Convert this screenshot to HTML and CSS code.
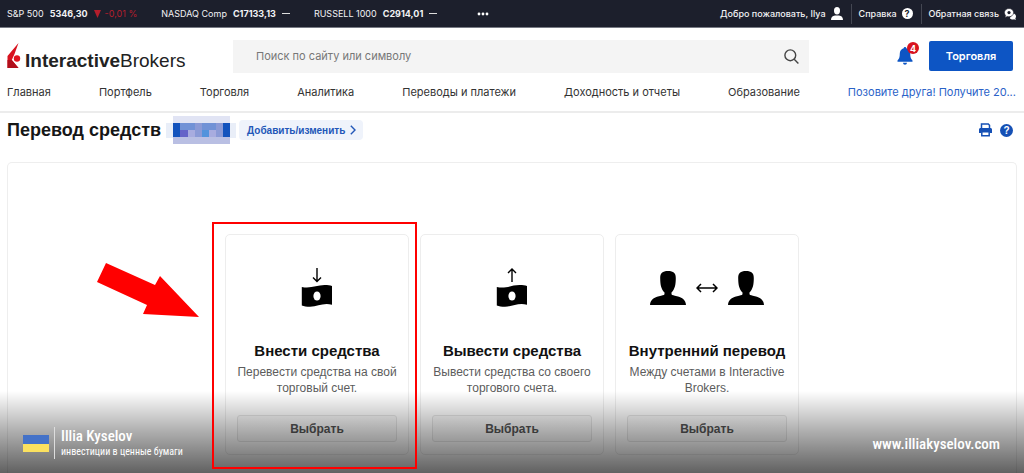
FILE: index.html
```html
<!DOCTYPE html>
<html lang="ru">
<head>
<meta charset="utf-8">
<meta name="viewport" content="width=device-width, initial-scale=1">
<title>Перевод средств</title>
<link rel="stylesheet" href="styles.css">
</head>
<body>
<div class="page">
  <div class="topbar">
    <div class="tickers">
      <div class="ticker"><span>S&amp;P 500</span><b>5346,30</b><span class="down"><svg width="7" height="8" viewBox="0 0 7 8" aria-hidden="true"><path d="M0 0h7L3.500 8z" fill="currentColor"/></svg>-0,01 %</span></div>
      <div class="ticker"><span>NASDAQ Comp</span><b>C17133,13</b><span class="dash"></span></div>
      <div class="ticker"><span>RUSSELL 1000</span><b>C2914,01</b><span class="dash"></span></div>
      <button class="more" aria-label="Ещё"><svg width="12" height="4" viewBox="0 0 12 4" fill="#fff"><circle cx="2" cy="2" r="1.400"/><circle cx="6" cy="2" r="1.400"/><circle cx="10" cy="2" r="1.400"/></svg></button>
    </div>
    <div class="account">
      <a href="#">Добро пожаловать, Ilya <svg width="12" height="13" viewBox="0 0 12 13" fill="#fff"><ellipse cx="6" cy="3.700" rx="3" ry="3.700"/><path d="M0 13c0-3 1.500-4.300 4-4.600h4c2.500.3 4 1.600 4 4.600z"/></svg></a>
      <a href="#">Справка <span class="help-dot">?</span></a>
      <a href="#">Обратная связь <svg width="12" height="12" viewBox="0 0 12 12"><path d="M9 5.500c2 .3 3 1.400 3 3 0 .8-.3 1.400-.7 1.900l.6 1.500-1.900-.6c-1.800.5-3.500 0-4.200-1.300z" fill="#fff"/><path d="M5 .5C7.600.500 9.600 2.300 9.600 4.600S7.600 8.800 5 8.800c-.6 0-1.100-.1-1.600-.3L.9 9.500l.7-2.100C.8 6.700.4 5.700.4 4.600.4 2.300 2.400.500 5 .500z" fill="#fff" stroke="#1c1f2c" stroke-width=".6"/><circle cx="5" cy="4.600" r="1.600" fill="#1c1f2c"/></svg></a>
    </div>
  </div>

  <header class="header">
    <a class="logo" href="#">
      <svg width="14" height="26" viewBox="0 0 14 26" aria-hidden="true"><path d="M11.500 0 7.500 11 4.800 17l6.700 8H.5V13z" fill="#d8131f"/><path d="M.5 17v8h11L4.800 17z" fill="#b10f1b"/><circle cx="10" cy="15.500" r="3.200" fill="#e01420"/></svg>
      <span class="logo-text"><b>Interactive</b>Brokers</span>
    </a>
    <label class="search">
      <input type="search" placeholder="Поиск по сайту или символу" aria-label="Поиск по сайту или символу">
      <svg width="15" height="15" viewBox="0 0 15 15" fill="none" stroke="#444" stroke-width="1.400"><circle cx="6.300" cy="6.300" r="5.400"/><path d="m10.200 10.200 4.200 4.200"/></svg>
    </label>
    <div class="actions">
      <button class="bell" aria-label="Уведомления">
        <svg width="16" height="18" viewBox="0 0 16 18" fill="#0d55c4"><path d="M8 0c.8 0 1.300.6 1.300 1.300C11.800 2 13.200 4 13.200 6.500c0 4 .8 5.500 2.300 7v1.300H.5v-1.300c1.500-1.500 2.300-3 2.300-7C2.800 4 4.200 2 6.700 1.300 6.700.6 7.200 0 8 0zM6 15.800h4c-.1 1.200-.9 1.900-2 1.900s-1.900-.7-2-1.900z"/></svg>
        <span class="badge">4</span>
      </button>
      <button class="trade">Торговля</button>
    </div>
  </header>

  <nav class="nav">
    <a href="#">Главная</a>
    <a href="#">Портфель</a>
    <a href="#">Торговля</a>
    <a href="#">Аналитика</a>
    <a href="#">Переводы и платежи</a>
    <a href="#">Доходность и отчеты</a>
    <a href="#">Образование</a>
    <a class="promo" href="#">Позовите друга! Получите 20...</a>
  </nav>

  <div class="title-row">
    <h1>Перевод средств</h1>
    <span class="masked"><svg width="70" height="28" viewBox="0 0 70 28" shape-rendering="crispEdges"><path fill="#e9eef8" d="M0 7h70v15H0z"/><path fill="#e1e4f4" d="M7 0h57v7H7z"/><path fill="#b9bfe3" d="M7 21h57v7H7z"/><path fill="#1353bd" d="M7 7h7v14H7zM57 7h7v14h-7z"/><path fill="#7192d6" d="M14 7h15v7H14zM36 7h14v7H36z"/><path fill="#8b9ad6" d="M29 7h7v7h-7zM50 7h7v14h-7zM28 14h8v7h-8z"/><path fill="#6463c8" d="M14 14h8v7h-8z"/><path fill="#a8acdf" d="M22 14h7v7h-7zM43 14h7v7h-7z"/><path fill="#5293dc" d="M36 14h7v7h-7z"/></svg></span>
    <button class="chip">Добавить/изменить <svg width="6" height="10" viewBox="0 0 6 10" fill="none" stroke="#2257b8" stroke-width="1.400"><path d="m.8.800 4.200 4.200L.8 9.200"/></svg></button>
    <div class="tools">
      <button aria-label="Печать"><svg width="13" height="14" viewBox="0 0 13 14"><path d="M2.500 5V1h6.800l1.200 1.200V5" fill="none" stroke="#1550b5" stroke-width="1.500"/><path d="M1.500 5h10c.8 0 1.500.7 1.500 1.500V10h-2V8.500H2V10H0V6.500C0 5.700.7 5 1.500 5z" fill="#1550b5"/><path d="M2.800 8.800h7.400v4H2.800z" fill="#fff" stroke="#1550b5" stroke-width="1.500"/></svg></button>
      <button class="help-blue" aria-label="Справка">?</button>
    </div>
  </div>

  <main class="panel">
    <div class="cards">
      <section class="card selected">
        <div class="icon"><svg width="32" height="40" viewBox="0 0 32 40"><path d="M16 0v13M12 9.500l4 4 4-4" fill="none" stroke="#000" stroke-width="1.400"/><path d="M.8 19c9 2 15-2 23-1.900 3 0 5.200.3 7.200.9v18.700c-9-2.200-14 1.800-22 2-3.500 0-6-.3-8.200-1.200z"/><ellipse cx="16" cy="28" rx="3.600" ry="4.600" fill="#fff"/></svg></div>
        <h2>Внести средства</h2>
        <p>Перевести средства на свой торговый счет.</p>
        <button class="choose">Выбрать</button>
        <span class="frame"></span>
        <svg class="pointer" width="102" height="56" viewBox="0 0 102 56" aria-hidden="true"><path d="m9 0 49 22 5-9 39 41-56-3 4-9L0 19z" fill="#f00"/></svg>
      </section>
      <section class="card">
        <div class="icon"><svg width="32" height="40" viewBox="0 0 32 40"><path d="M16 14V1M12 5l4-4 4 4" fill="none" stroke="#000" stroke-width="1.400"/><path d="M.8 19c9 2 15-2 23-1.900 3 0 5.200.3 7.200.9v18.700c-9-2.200-14 1.800-22 2-3.500 0-6-.3-8.200-1.200z"/><ellipse cx="16" cy="28" rx="3.600" ry="4.600" fill="#fff"/></svg></div>
        <h2>Вывести средства</h2>
        <p>Вывести средства со своего торгового счета.</p>
        <button class="choose">Выбрать</button>
      </section>
      <section class="card">
        <div class="icon people">
          <svg width="36" height="34" viewBox="0 0 36 34"><path id="person" d="M18 0c5.500 0 8 2.200 7.800 7.500-.1 6-.8 10.500-4.300 14v1.700c.5 1 2.500 1.300 5.500 2 5.500 1.300 8.700 4 9 8.800H0c.3-4.800 3.500-7.500 9-8.800 3-.7 5-1 5.500-2v-1.700c-3.500-3.500-4.200-8-4.300-14C10 2.200 12.500 0 18 0z"/></svg>
          <svg width="22" height="10" viewBox="0 0 22 10" fill="none" stroke="#000" stroke-width="1.500"><path d="M1 5h20M5 1 1 5l4 4M17 1l4 4-4 4"/></svg>
          <svg width="36" height="34" viewBox="0 0 36 34"><use href="#person"/></svg>
        </div>
        <h2>Внутренний перевод</h2>
        <p>Между счетами в Interactive Brokers.</p>
        <button class="choose">Выбрать</button>
      </section>
    </div>
  </main>

  <footer class="overlay">
    <div class="brand">
      <svg width="26" height="17" viewBox="0 0 26 17" aria-hidden="true"><path fill="#4472c8" d="M0 0h26v9H0z"/><path fill="#fbe15f" d="M0 9h26v8H0z"/></svg>
      <div class="brand-text"><strong>Illia Kyselov</strong><span>инвестиции в ценные бумаги</span></div>
    </div>
    <a class="site" href="#">www.illiakyselov.com</a>
  </footer>
</div>
</body>
</html>
```
FILE: styles.css
```css
* { box-sizing: border-box; }
body { margin: 0; background: #fff; color: #222; font-family: "Liberation Sans", Arial, sans-serif; }
a { color: inherit; text-decoration: none; }
button { font: inherit; border: 0; padding: 0; background: none; cursor: pointer; }
svg { display: block; flex: none; }
h1, h2, p { margin: 0; }

.page { position: relative; display: flex; flex-direction: column; min-height: 100vh; overflow: hidden; }

.topbar, .header, .nav, .account, .search { font-family: Inter, "Noto Sans", sans-serif; }
.topbar { display: flex; justify-content: space-between; align-items: center; height: 28px; padding: 0 8px 0 7px; background: #1c1f2c; color: #f2f2f4; font-size: 9px; white-space: nowrap; border-bottom: 1px solid #777a84; }
.tickers { display: flex; align-items: center; gap: 24px; }
.ticker { display: flex; align-items: center; gap: 6px; }
.down { display: flex; align-items: center; gap: 4px; color: #b51e2c; }
.dash { width: 8px; height: 1px; background: #ddd; }
.more { margin-left: 16px; }
.account { display: flex; align-items: center; font-weight: 500; }
.account a { display: flex; align-items: center; gap: 5px; height: 20px; }
.account a + a { margin-left: 8px; padding-left: 7px; border-left: 1px solid #444752; }
.help-dot, .help-blue { display: grid; place-items: center; border-radius: 50%; font-weight: 700; }
.help-dot { width: 11px; height: 11px; background: #fff; color: #1c1f2c; font-size: 9px; }

.header { display: flex; align-items: center; height: 56px; padding: 0 11px 0 7px; }
.logo { display: flex; align-items: flex-end; gap: 4px; width: 226px; flex: none; color: #222; }
.logo-text { font: 19px/16px "Liberation Sans", Arial, sans-serif; }
.search { display: flex; align-items: center; flex: 1; height: 33px; padding: 0 10px 0 23px; background: #f4f4f4; }
.search input { flex: 1; min-width: 0; border: 0; padding: 0; outline: 0; background: none; font: 11px Inter, sans-serif; color: #333; }
.search input::placeholder { color: #777; opacity: 1; }
.actions { display: flex; justify-content: flex-end; align-items: center; gap: 16px; width: 204px; flex: none; }
.bell { position: relative; }
.badge { position: absolute; top: -5px; right: -6px; display: grid; place-items: center; width: 12px; height: 12px; border-radius: 50%; background: #d8131f; color: #fff; font-size: 9px; font-weight: 700; }
.trade { width: 84px; height: 30px; border-radius: 2px; background: #0d55c4; color: #fff; font-size: 11px; font-weight: 600; }

.nav { display: flex; justify-content: space-between; height: 29px; padding: 0 8px 0 7px; border-bottom: 2px solid #ececec; font-size: 11px; line-height: 16px; white-space: nowrap; color: #333; }
.promo { color: #2a62c8; }

.title-row { display: flex; align-items: center; height: 34px; padding: 0 11px 0 7px; }
h1 { font-size: 18px; line-height: 24px; color: #161616; white-space: nowrap; }
.masked { margin: 0 3px 0 5px; }
.chip { display: flex; align-items: center; gap: 5px; height: 20px; padding: 0 7px 0 8px; border-radius: 4px; background: #eff3fb; color: #2257b8; font-size: 10px; font-weight: 700; white-space: nowrap; }
.tools { display: flex; align-items: center; gap: 8px; margin-left: auto; }
.help-blue { width: 13px; height: 13px; background: #1550b5; color: #fff; font-size: 10px; }

.panel { flex: 1; margin: 15px 7px 0; padding: 71px 16px 18px; border: 1px solid #eee; border-bottom: 0; border-radius: 5px 5px 0 0; }
.cards { display: flex; justify-content: center; gap: 11px; }
.card { position: relative; display: flex; flex-direction: column; width: 184px; padding: 33px 11px 12px; border: 1px solid #ededed; border-radius: 5px; text-align: center; }
.icon { display: flex; justify-content: center; height: 74px; }
.people { gap: 10px; padding-top: 3px; }
.people svg:nth-child(2) { margin-top: 12px; }
h2 { font-size: 15px; line-height: 18px; color: #111; white-space: nowrap; }
.card p { margin-top: 4px; font-size: 12px; line-height: 16px; color: #5c5c5c; }
.choose { height: 27px; margin-top: 19px; border: 1px solid #e6e6e6; border-radius: 3px; background: #fafafa; color: #555; font-size: 12px; font-weight: 700; }
.frame { position: absolute; z-index: 3; top: -13px; right: -9px; bottom: -15px; left: -14px; border: 2px solid #f00; pointer-events: none; }
.pointer { position: absolute; top: 28px; left: -129px; }

.overlay { position: absolute; z-index: 2; right: 0; bottom: 0; left: 0; display: flex; justify-content: space-between; align-items: flex-end; height: 82px; padding: 0 24px 14px 23px; background: linear-gradient(rgba(0, 0, 0, 0), rgba(0, 0, 0, .32) 50%, rgba(0, 0, 0, .62)); color: #fff; font-family: "Liberation Sans Narrow", "Roboto Condensed", "Open Sans Condensed", Roboto, sans-serif; pointer-events: none; }
.brand { display: flex; align-items: center; gap: 5px; }
.brand-text { display: flex; flex-direction: column; padding-left: 6px; border-left: 1px solid #ddd; font-size: 10px; line-height: 14px; }
.brand strong { font-size: 15px; line-height: 18px; font-weight: 500; }
.site { font-size: 15px; line-height: 18px; font-weight: 500; padding-bottom: 6px; pointer-events: auto; }
```
